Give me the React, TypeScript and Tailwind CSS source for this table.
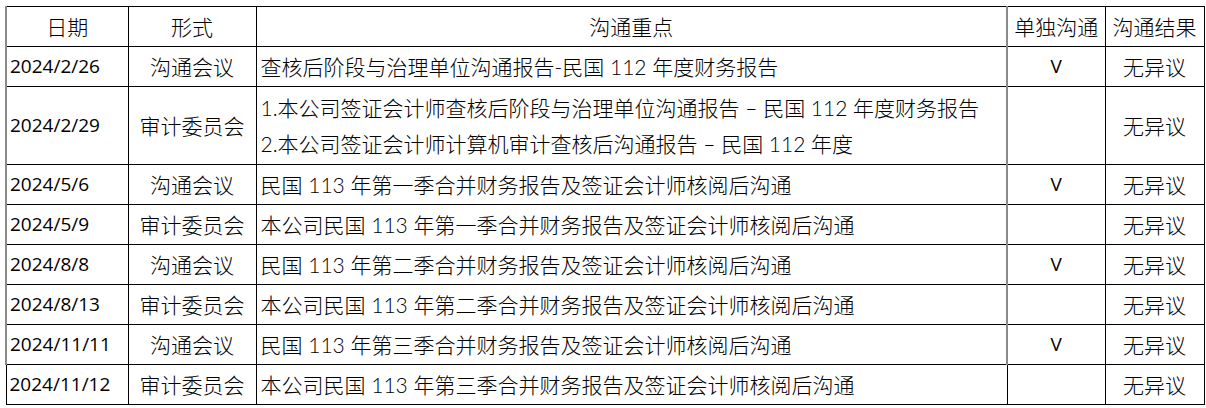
const rows = [
  { date: "2024/2/26", form: "沟通会议", lines: ["查核后阶段与治理单位沟通报告-民国 112 年度财务报告"], alone: true },
  {
    date: "2024/2/29",
    form: "审计委员会",
    lines: [
      "1.本公司签证会计师查核后阶段与治理单位沟通报告 – 民国 112 年度财务报告",
      "2.本公司签证会计师计算机审计查核后沟通报告 – 民国 112 年度"
    ],
    alone: false
  },
  { date: "2024/5/6", form: "沟通会议", lines: ["民国 113 年第一季合并财务报告及签证会计师核阅后沟通"], alone: true },
  { date: "2024/5/9", form: "审计委员会", lines: ["本公司民国 113 年第一季合并财务报告及签证会计师核阅后沟通"], alone: false },
  { date: "2024/8/8", form: "沟通会议", lines: ["民国 113 年第二季合并财务报告及签证会计师核阅后沟通"], alone: true },
  { date: "2024/8/13", form: "审计委员会", lines: ["本公司民国 113 年第二季合并财务报告及签证会计师核阅后沟通"], alone: false },
  { date: "2024/11/11", form: "沟通会议", lines: ["民国 113 年第三季合并财务报告及签证会计师核阅后沟通"], alone: true },
  { date: "2024/11/12", form: "审计委员会", lines: ["本公司民国 113 年第三季合并财务报告及签证会计师核阅后沟通"], alone: false }
];

const font = { fontFamily: "Lato, 'Noto Sans CJK SC', sans-serif" };
const latin = { fontFamily: "'Open Sans', sans-serif" };

export default function App() {
  return (
    <div className="bg-white w-[1206px] h-[408px] pl-[5px] pt-[6px] text-black text-[21px] font-light leading-none" style={font}>
      <table className="border-collapse table-fixed w-[1198px]">
        <colgroup>
          <col className="w-[122px]" />
          <col className="w-[128px]" />
          <col className="w-[751px]" />
          <col className="w-[98px]" />
          <col className="w-[99px]" />
        </colgroup>
        <thead>
          <tr className="h-[40px]">
            <th className="border border-black border-l-[#8a8a8a] border-l-2 font-light text-center">日期</th>
            <th className="border border-black font-light text-center">形式</th>
            <th className="border border-black font-light text-center">沟通重点</th>
            <th className="border border-black border-l-[#8a8a8a] border-l-2 font-light text-center">单独沟通</th>
            <th className="border border-black font-light text-center">沟通结果</th>
          </tr>
        </thead>
        <tbody>
          {rows.map((row, i) => {
            const last = i === rows.length - 1;
            return (
              <tr className={row.lines.length > 1 ? "h-[78px]" : "h-[40px]"} key={row.date}>
                <td
                  className={`border border-black pl-[3px] text-left text-[19px] font-normal ${last ? "" : "border-l-[#8a8a8a] border-l-2"}`}
                  style={latin}
                >
                  {row.date}
                </td>
                <td className="border border-black text-center">{row.form}</td>
                <td className="border border-black pl-[4px] text-left">
                  <div className="flex flex-col gap-[15px] pb-[1px]">
                    {row.lines.map((line) => (
                      <span key={line}>{line}</span>
                    ))}
                  </div>
                </td>
                <td
                  className={`border border-black text-center text-[19px] font-normal ${last ? "" : "border-l-[#8a8a8a] border-l-2"}`}
                  style={latin}
                >
                  {row.alone ? "V" : ""}
                </td>
                <td className="border border-black text-center">无异议</td>
              </tr>
            );
          })}
        </tbody>
      </table>
    </div>
  );
}
